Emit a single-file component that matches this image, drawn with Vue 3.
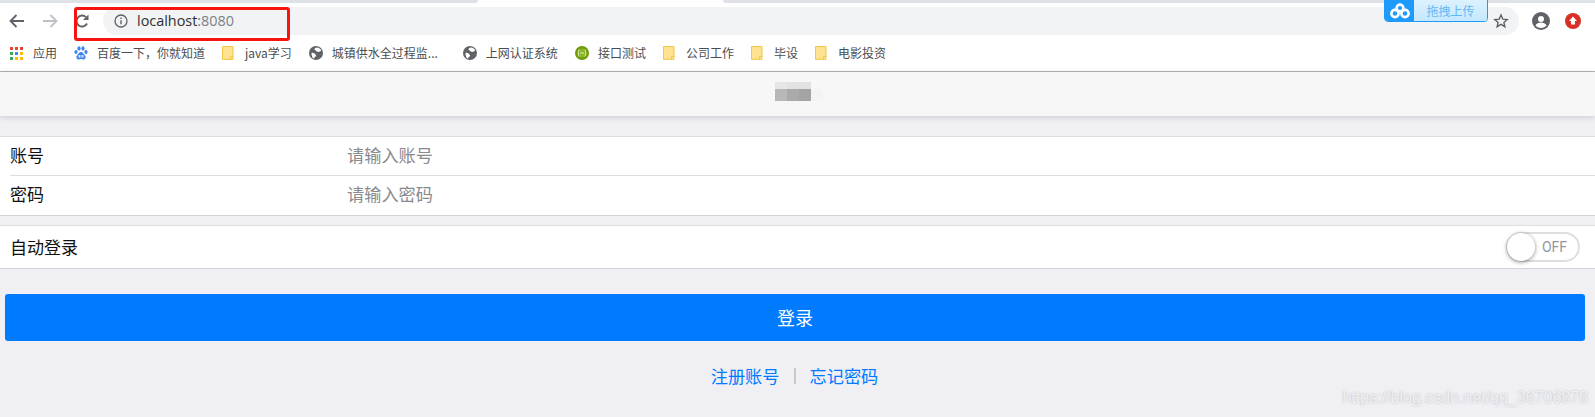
<script setup>
const bookmarks = [
  { icon: 'apps', text: '应用', gap: 10, offset: 0 },
  { icon: 'paw', text: '百度一下，你就知道', gap: 9, offset: 0 },
  { icon: 'folder', text: 'java学习', gap: 11, offset: 0 },
  { icon: 'globe', text: '城镇供水全过程监...', gap: 9, offset: 0 },
  { icon: 'globe', text: '上网认证系统', gap: 9, offset: 8 },
  { icon: 'green', text: '接口测试', gap: 9, offset: 0 },
  { icon: 'folder', text: '公司工作', gap: 11, offset: 0 },
  { icon: 'folder', text: '毕设', gap: 11, offset: 0 },
  { icon: 'folder', text: '电影投资', gap: 11, offset: 0 }
]
const appDots = ['#ea4335', '#ea4335', '#ea4335', '#34a853', '#4285f4', '#fbbc05', '#34a853', '#fbbc05', '#fbbc05']
const mosaic = ['#e6e6e6', '#e2e2e2', '#e2e2e2', '#f7f7f7', '#b8b8b8', '#aaaaaa', '#a4a4a4', '#f4f4f4']
</script>

<template>
  <div class="page">
    <div class="tabstrip">
      <div class="tab-gray left"></div>
      <div class="tab-active"></div>
      <div class="tab-gray right"></div>
    </div>

    <div class="toolbar">
      <svg class="nav back" width="16" height="14" viewBox="0 0 16 14"><path d="M15 7H2M7.500 1 1.500 7l6 6" fill="none" stroke="#5f6368" stroke-width="1.800"/></svg>
      <svg class="nav fwd" width="16" height="14" viewBox="0 0 16 14"><path d="M1 7h13M8.500 1l6 6-6 6" fill="none" stroke="#bdc1c6" stroke-width="1.800"/></svg>
      <svg class="nav reload" width="14" height="14" viewBox="0 0 14 14"><path d="M12 9.500A5.500 5.500 0 1 1 11 3.200" fill="none" stroke="#5f6368" stroke-width="1.900"/><path d="M13.500 0.500V6H8z" fill="#5f6368"/></svg>
      <div class="omnibox">
        <svg class="info" width="14" height="14" viewBox="0 0 14 14"><circle cx="7" cy="7" r="6" fill="none" stroke="#5f6368" stroke-width="1.300"/><path d="M7 6.200v4M7 3.600v1.400" stroke="#5f6368" stroke-width="1.400"/></svg>
        <span class="host">localhost</span><span class="port">:8080</span>
        <svg class="star" width="16" height="16" viewBox="0 0 16 16"><path d="m8 2 1.800 4.100 4.400.4-3.300 2.900 1 4.300L8 11.400l-3.900 2.300 1-4.300-3.300-2.900 4.400-.4z" fill="none" stroke="#5f6368" stroke-width="1.400"/></svg>
      </div>
      <svg class="avatar" width="18" height="18" viewBox="0 0 18 18"><circle cx="9" cy="9" r="9" fill="#5f6368"/><circle cx="9" cy="7" r="3" fill="#fff"/><path d="M3.500 13.500c1-2.200 3.400-3 5.500-3s4.500.8 5.500 3c-1.300 1.500-3.300 2.500-5.500 2.500s-4.200-1-5.500-2.500z" fill="#fff"/></svg>
      <svg class="upload" width="16" height="16" viewBox="0 0 16 16"><circle cx="8" cy="8" r="8" fill="#d93025"/><path d="M8 3.500 12 8H10v3.500H6V8H4z" fill="#fff"/></svg>
    </div>

    <div class="bookmarks">
      <div v-for="b in bookmarks" :key="b.text" class="bookmark" :style="{ gap: b.gap + 'px', marginLeft: b.offset + 'px' }">
        <span v-if="b.icon === 'apps'" class="apps"><i v-for="(c, i) in appDots" :key="i" :style="{ background: c }"></i></span>
        <svg v-else-if="b.icon === 'paw'" width="14" height="14" viewBox="0 0 14 14" fill="#3f83f0"><ellipse cx="2" cy="6" rx="1.600" ry="2"/><ellipse cx="5" cy="2.400" rx="1.600" ry="2.200"/><ellipse cx="9" cy="2.400" rx="1.600" ry="2.200"/><ellipse cx="12" cy="6" rx="1.600" ry="2"/><path d="M7 6c2 0 2.500 2 4 3.500 1.300 1.500.4 4-1.500 4-1 0-1.600-.4-2.500-.4s-1.500.4-2.500.4c-1.900 0-2.800-2.500-1.500-4C4.500 8 5 6 7 6z"/><rect x="4.500" y="9" width="2" height="2.600" fill="#d5e5fc"/><rect x="7.500" y="9" width="2" height="2.600" fill="#d5e5fc"/></svg>
        <svg v-else-if="b.icon === 'folder'" width="12" height="14" viewBox="0 0 12 14"><path d="M.5.500h10.500v12.900H.5z" fill="#fee28f" stroke="#f1c84c"/><path d="M8.500 13.500v-3h3" fill="none" stroke="#f1c84c"/></svg>
        <svg v-else-if="b.icon === 'globe'" width="14" height="14" viewBox="0 0 14 14"><circle cx="7" cy="7" r="7" fill="#5f6368"/><path d="M8 1.500c2 .2 3.600 1.300 4.300 3-1.400.6-2.300 1.800-3.800 1.300S6.300 3.800 5.300 3.500C5.700 2.300 7 1.500 8 1.500zM2.500 7c1.500-.5 3 .5 4 1.500s.5 2-.5 2.500-1 2-1.500 1.500C3 11.500 2.500 9 2.500 7z" fill="#fff"/></svg>
        <svg v-else width="14" height="14" viewBox="0 0 14 14"><circle cx="7" cy="7" r="7" fill="#6f9a0a"/><circle cx="7" cy="7" r="4.500" fill="#8cb52a"/><path d="M4 3.500C3 5.500 3 8.500 4 10.500M10 3.500c1 2 1 5 0 7M5 7h4" stroke="#dcebb4" stroke-width="1" fill="none"/></svg>
        <span class="bm-text">{{ b.text }}</span>
      </div>
    </div>

    <header class="app-header">
      <div class="mosaic"><i v-for="(c, i) in mosaic" :key="i" :style="{ background: c }"></i></div>
    </header>

    <main class="content">
      <section class="group">
        <div class="row first">
          <span class="label">账号</span>
          <span class="placeholder">请输入账号</span>
        </div>
        <div class="row next">
          <span class="label">密码</span>
          <span class="placeholder">请输入密码</span>
        </div>
      </section>

      <section class="group second">
        <div class="row switch-row">
          <span class="label">自动登录</span>
          <div class="switch">
            <span class="knob"></span>
            <span class="off">OFF</span>
          </div>
        </div>
      </section>

      <div class="actions">
        <button class="login">登录</button>
      </div>

      <div class="links">
        <a>注册账号</a>
        <span class="sep"></span>
        <a>忘记密码</a>
      </div>
    </main>

    <div class="red-box"></div>

    <div class="uploader">
      <span class="cloud">
        <svg width="20" height="16" viewBox="0 0 20 16" fill="none" stroke="#fff" stroke-width="2.600"><circle cx="10" cy="5" r="3.400"/><circle cx="5" cy="10.500" r="3.600"/><circle cx="15" cy="10.500" r="3.600"/></svg>
      </span>
      <span class="drag">拖拽上传</span>
    </div>

    <div class="watermark">https://blog.csdn.net/qq_36706878</div>
  </div>
</template>

<style>
html, body { margin: 0; background: #efeff4; }
</style>

<style scoped>
.page {
  position: relative;
  width: 1595px;
  height: 417px;
  overflow: hidden;
  background: #efeff4;
  font-family: "Noto Sans CJK SC", "Liberation Sans", sans-serif;
}
.tabstrip {
  display: flex;
  height: 7px;
  background: #fff;
}
.tab-gray { height: 3px; background: #dee1e6; }
.tab-gray.left { width: 478px; border-bottom-right-radius: 6px; }
.tab-active { width: 245px; }
.tab-gray.right { flex: 1; border-bottom-left-radius: 6px; }

.toolbar {
  display: flex;
  align-items: center;
  height: 28px;
  background: #fff;
}
.nav { flex: none; }
.back { margin-left: 9px; }
.fwd { margin-left: 17px; }
.reload { margin-left: 17px; margin-top: -1px; }
.omnibox {
  display: flex;
  align-items: center;
  flex: none;
  width: 1416px;
  height: 28px;
  margin-left: 14px;
  border-radius: 14px;
  background: #f1f3f4;
}
.info { margin-left: 11px; margin-right: 9px; flex: none; }
.host, .port {
  font-family: "Open Sans", sans-serif;
  font-size: 14.400px;
  line-height: 28px;
}
.host { color: #2d2f31; }
.port { color: #7d8187; }
.star { margin-left: auto; margin-right: 10px; }
.avatar { margin-left: 13px; flex: none; }
.upload { margin-left: 15px; flex: none; }

.bookmarks {
  display: flex;
  align-items: center;
  gap: 17px;
  height: 36px;
  padding-left: 10px;
  background: #fff;
  border-bottom: 1px solid #b6b6b6;
}
.bookmark {
  display: flex;
  align-items: center;
  flex: none;
}
.bm-text {
  font-size: 12px;
  line-height: 16px;
  color: #4a4d50;
}
.apps {
  display: grid;
  grid-template-columns: repeat(3, 3px);
  grid-auto-rows: 3px;
  gap: 2px;
}
.apps i { display: block; }

.app-header {
  position: relative;
  display: flex;
  justify-content: center;
  align-items: flex-start;
  box-sizing: border-box;
  height: 44px;
  padding-top: 10px;
  padding-left: 3px;
  background: #f7f7f7;
  box-shadow: 0 1px 6px rgba(0, 0, 0, .16);
}
.mosaic {
  display: grid;
  grid-template-columns: repeat(4, 12px);
  grid-template-rows: 7px 12px;
}
.mosaic i { display: block; }

.content { padding-top: 20px; }
.group {
  background: #fff;
  border-top: 1px solid #dedee2;
  border-bottom: 1px solid #d3d3d7;
}
.group.second { margin-top: 9px; }
.row {
  display: flex;
  align-items: center;
  box-sizing: border-box;
  margin-left: 10px;
  font-size: 17px;
}
.row.first { height: 38px; padding-bottom: 3px; }
.row.next { height: 40px; padding-bottom: 4px; border-top: 1px solid #dedee2; }
.label { width: 337px; color: #111; flex: none; }
.placeholder { color: #8a8a8e; font-size: 17.200px; }
.switch-row { height: 42px; justify-content: space-between; padding-right: 15px; }
.switch-row .label { padding-bottom: 2px; }
.switch {
  position: relative;
  display: flex;
  align-items: center;
  justify-content: flex-end;
  box-sizing: border-box;
  width: 74px;
  height: 30px;
  padding-right: 11px;
  border: 2px solid #dedede;
  border-radius: 15px;
  background: #fff;
}
.knob {
  position: absolute;
  left: -1px;
  top: -1px;
  width: 28px;
  height: 28px;
  border-radius: 50%;
  background: #fff;
  box-shadow: 0 1px 4px rgba(0, 0, 0, .45);
}
.off {
  font-family: Roboto, sans-serif;
  font-size: 14px;
  color: #96969c;
}

.actions { padding: 25px 10px 0 5px; }
.login {
  display: block;
  width: 100%;
  height: 47px;
  padding: 0 0 2px;
  border: 0;
  border-radius: 3px;
  background: #007aff;
  color: #fff;
  font-family: inherit;
  font-size: 18px;
}
.links {
  display: flex;
  justify-content: center;
  align-items: center;
  gap: 14px;
  margin-top: 23px;
  padding-right: 6px;
  font-size: 17.200px;
  line-height: 24px;
  color: #007aff;
}
.sep { width: 2px; height: 16px; background: #c8c7cc; }

.red-box {
  position: absolute;
  left: 74px;
  top: 7px;
  box-sizing: border-box;
  width: 216px;
  height: 34px;
  border: 3px solid #f5140f;
  border-radius: 3px;
}
.uploader {
  position: absolute;
  left: 1384px;
  top: -1px;
  display: flex;
  width: 104px;
  height: 23px;
  box-sizing: border-box;
  border: 1px solid #1e9bfa;
  border-radius: 0 0 4px 4px;
  overflow: hidden;
}
.cloud {
  display: flex;
  align-items: center;
  justify-content: center;
  width: 29px;
  background: #1e9bfa;
}
.drag {
  flex: 1;
  text-align: center;
  font-size: 12px;
  line-height: 21px;
  color: #62b8f6;
  background: linear-gradient(#ddf1fe, #c4e8fe);
}
.watermark {
  position: absolute;
  right: 7px;
  top: 387px;
  font-family: "Liberation Sans", sans-serif;
  font-size: 16px;
  line-height: 22px;
  color: rgba(255, 255, 255, .7);
  text-shadow: 0 0 2px rgba(110, 110, 110, .45);
}
</style>
